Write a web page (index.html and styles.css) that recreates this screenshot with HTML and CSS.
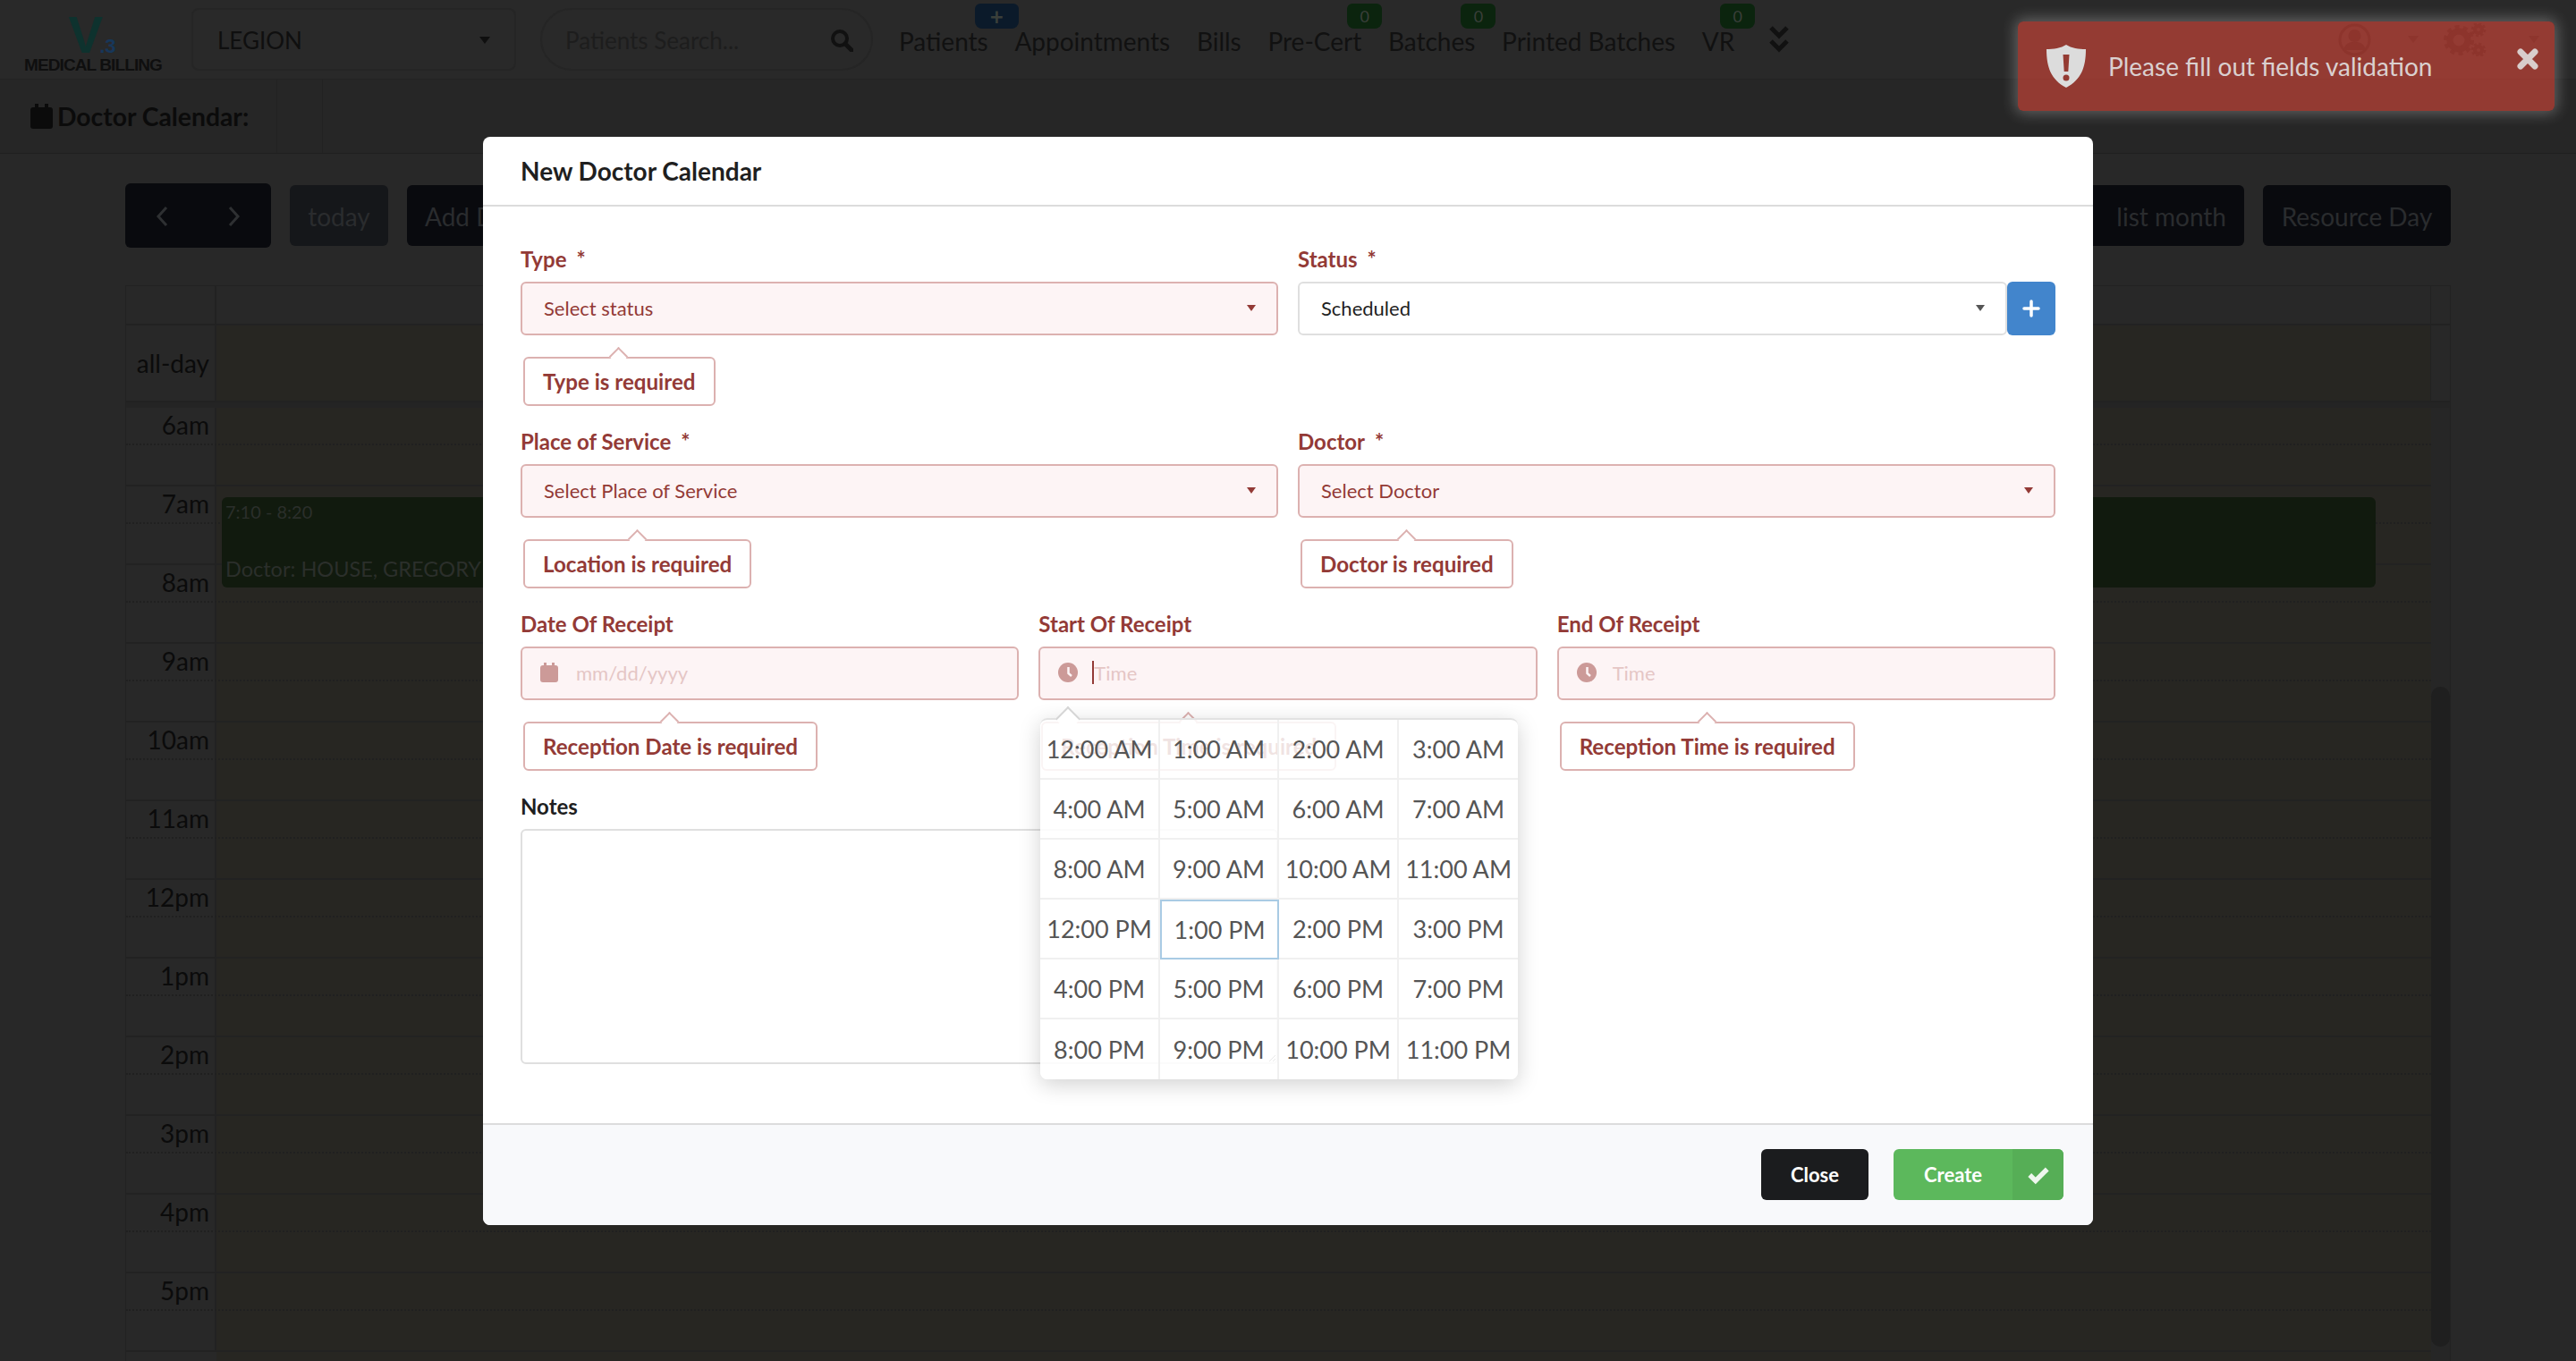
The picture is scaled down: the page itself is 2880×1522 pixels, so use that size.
FILE: index.html
```html
<!doctype html>

<html>
	<head>
		<meta charset="utf-8">
		<title>Doctor Calendar</title>
		<link rel="stylesheet" href="styles.css">
	</head>
	<body>
		<header id="topbar">
			<div class="logo">
				<div class="logo-mark"><span class="logo-v">V</span><span class="logo-ver">.3</span></div>
				<div class="logo-name">MEDICAL BILLING</div>
			</div>
			<div class="clinic-select"><span>LEGION</span><i class="caret"></i></div>
			<div class="search">
				<span>Patients Search...</span>
				<svg class="search-icon" viewBox="0 0 26 26"><circle cx="11" cy="11" r="8" fill="none" stroke="#111" stroke-width="4"/><path d="M17 17l7 7" stroke="#111" stroke-width="5" stroke-linecap="round"/></svg>
			</div>
			<nav class="nav">
				<a>Patients<b class="badge badge-blue">+</b></a>
				<a>Appointments</a>
				<a>Bills</a>
				<a>Pre-Cert<b class="badge badge-green">0</b></a>
				<a>Batches<b class="badge badge-green">0</b></a>
				<a>Printed Batches</a>
				<a>VR<b class="badge badge-green">0</b></a>
			</nav>
			<svg class="more" viewBox="0 0 24 30"><path d="M3 2l9 9 9-9M3 17l9 9 9-9" fill="none" stroke="#111" stroke-width="5"/></svg>
			<div class="user-tools">
				<svg class="user-icon" viewBox="0 0 37 37"><circle cx="18.500" cy="18.500" r="16.500" fill="none" stroke="#111" stroke-width="3"/><circle cx="18.500" cy="14" r="7" fill="#111"/><path d="M6 30c2-8 7-9 12.500-9S29 22 31 30z" fill="#111"/></svg>
				<i class="caret"></i>
				<svg class="gears-icon" viewBox="0 0 48 37"><circle cx="17" cy="19" r="10" fill="none" stroke="#111" stroke-width="7"/><circle cx="17" cy="19" r="15" fill="none" stroke="#111" stroke-width="4" stroke-dasharray="5 4.400"/><circle cx="39" cy="7" r="4" fill="none" stroke="#111" stroke-width="4"/><circle cx="39" cy="7" r="7" fill="none" stroke="#111" stroke-width="2.500" stroke-dasharray="3 2.500"/><circle cx="39" cy="30" r="4" fill="none" stroke="#111" stroke-width="4"/><circle cx="39" cy="30" r="7" fill="none" stroke="#111" stroke-width="2.500" stroke-dasharray="3 2.500"/></svg>
				<i class="caret"></i>
			</div>
		</header>

		<div id="subbar">
			<div class="subbar-title">
				<svg class="cal-icon" viewBox="0 0 25 28"><path d="M5 0h4v4h7V0h4v4h2a3 3 0 0 1 3 3v18a3 3 0 0 1-3 3H3a3 3 0 0 1-3-3V7a3 3 0 0 1 3-3h2z" fill="#0b0b0b"/></svg>
				<span>Doctor Calendar:</span>
			</div>
			<div class="subbar-cell"></div>
		</div>

		<div id="toolbar">
			<div class="toolbar-left">
				<div class="btn-pair">
					<button class="tb-btn"><svg viewBox="0 0 14 24"><path d="M12 2L3 12l9 10" fill="none" stroke="#2e3032" stroke-width="3"/></svg></button>
					<button class="tb-btn"><svg viewBox="0 0 14 24"><path d="M2 2l9 10-9 10" fill="none" stroke="#2e3032" stroke-width="3"/></svg></button>
				</div>
				<button class="tb-btn tb-today">today</button>
				<button class="tb-btn tb-add">Add Doctor Calendar</button>
			</div>
			<div class="toolbar-right">
				<button class="tb-btn tb-list">list month</button>
				<button class="tb-btn tb-resource">Resource Day</button>
			</div>
		</div>

		<section id="calendar">
			<div class="cal-head"><div class="cal-axis"></div><div class="cal-title"></div><div class="cal-gutter"></div></div>
			<div class="cal-allday"><div class="cal-axis">all-day</div><div class="cal-lane"></div><div class="cal-gutter"></div></div>
			<div class="cal-divider"></div>
			<div class="cal-body">
				<div class="cal-rows">
					<div class="cal-row"><div class="cal-axis">6am</div><div class="cal-lane"></div></div>
					<div class="cal-row"><div class="cal-axis">7am</div><div class="cal-lane"></div></div>
					<div class="cal-row"><div class="cal-axis">8am</div><div class="cal-lane"></div></div>
					<div class="cal-row"><div class="cal-axis">9am</div><div class="cal-lane"></div></div>
					<div class="cal-row"><div class="cal-axis">10am</div><div class="cal-lane"></div></div>
					<div class="cal-row"><div class="cal-axis">11am</div><div class="cal-lane"></div></div>
					<div class="cal-row"><div class="cal-axis">12pm</div><div class="cal-lane"></div></div>
					<div class="cal-row"><div class="cal-axis">1pm</div><div class="cal-lane"></div></div>
					<div class="cal-row"><div class="cal-axis">2pm</div><div class="cal-lane"></div></div>
					<div class="cal-row"><div class="cal-axis">3pm</div><div class="cal-lane"></div></div>
					<div class="cal-row"><div class="cal-axis">4pm</div><div class="cal-lane"></div></div>
					<div class="cal-row"><div class="cal-axis">5pm</div><div class="cal-lane"></div></div>
					<div class="cal-row"><div class="cal-lane cal-lane-full"></div></div>
					<div class="cal-event">
						<div class="event-time">7:10 - 8:20</div>
						<div class="event-title">Doctor: HOUSE, GREGORY</div>
					</div>
				</div>
				<div class="cal-scroll"><div class="cal-thumb"></div></div>
			</div>
		</section>

		<div id="toast">
			<svg class="toast-shield" viewBox="0 0 44 48"><path d="M22 0c6 4 14 5 22 5 0 20-5 34-22 43C5 39 0 25 0 5c8 0 16-1 22-5z" fill="#dcdcdc"/><path d="M18.500 11h7l-1.200 19h-4.600z" fill="#943b33"/><circle cx="22" cy="37" r="3.500" fill="#943b33"/></svg>
			<span>Please fill out fields validation</span>
			<svg class="toast-close" viewBox="0 0 24 24"><path d="M4 4l16 16M20 4L4 20" stroke="#d8cdcb" stroke-width="7" stroke-linecap="round"/></svg>
		</div>

		<div id="modal">
			<div class="modal-head">New Doctor Calendar</div>
			<div class="modal-body">
				<div class="form-row two">
					<div class="field invalid">
						<label>Type<em>*</em></label>
						<div class="select"><span>Select status</span><i class="caret"></i></div>
						<div class="tip">Type is required</div>
					</div>
					<div class="field invalid-label">
						<label>Status<em>*</em></label>
						<div class="select-group">
							<div class="select"><span>Scheduled</span><i class="caret"></i></div>
							<button class="add-btn"><svg viewBox="0 0 20 20"><path d="M10 2v16M2 10h16" stroke="#fff" stroke-width="3.500" stroke-linecap="round"/></svg></button>
						</div>
					</div>
				</div>
				<div class="form-row two">
					<div class="field invalid">
						<label>Place of Service<em>*</em></label>
						<div class="select"><span>Select Place of Service</span><i class="caret"></i></div>
						<div class="tip">Location is required</div>
					</div>
					<div class="field invalid">
						<label>Doctor<em>*</em></label>
						<div class="select"><span>Select Doctor</span><i class="caret"></i></div>
						<div class="tip">Doctor is required</div>
					</div>
				</div>
				<div class="form-row three">
					<div class="field invalid">
						<label>Date Of Receipt</label>
						<div class="input">
							<svg class="input-icon" viewBox="0 0 20 22"><path d="M4 0h3v3h6V0h3v3h1a3 3 0 0 1 3 3v13a3 3 0 0 1-3 3H3a3 3 0 0 1-3-3V6a3 3 0 0 1 3-3h1z" fill="#cc9a98"/></svg>
							<span class="placeholder">mm/dd/yyyy</span>
						</div>
						<div class="tip">Reception Date is required</div>
					</div>
					<div class="field invalid">
						<label>Start Of Receipt</label>
						<div class="input">
							<svg class="input-icon clock-icon" viewBox="0 0 22 22"><circle cx="11" cy="11" r="11" fill="#cc9a98"/><path d="M11.500 5v7l3.500 3" fill="none" stroke="#fdf4f5" stroke-width="2.500"/></svg>
							<i class="text-cursor"></i><span class="placeholder">Time</span>
						</div>
						<div class="tip">Reception Time is required</div>
						<div class="time-picker">
							<a>12:00 AM</a><a>1:00 AM</a><a>2:00 AM</a><a>3:00 AM</a>
							<a>4:00 AM</a><a>5:00 AM</a><a>6:00 AM</a><a>7:00 AM</a>
							<a>8:00 AM</a><a>9:00 AM</a><a>10:00 AM</a><a>11:00 AM</a>
							<a>12:00 PM</a><a class="active">1:00 PM</a><a>2:00 PM</a><a>3:00 PM</a>
							<a>4:00 PM</a><a>5:00 PM</a><a>6:00 PM</a><a>7:00 PM</a>
							<a>8:00 PM</a><a>9:00 PM</a><a>10:00 PM</a><a>11:00 PM</a>
						</div>
					</div>
					<div class="field invalid">
						<label>End Of Receipt</label>
						<div class="input">
							<svg class="input-icon clock-icon" viewBox="0 0 22 22"><circle cx="11" cy="11" r="11" fill="#cc9a98"/><path d="M11.500 5v7l3.500 3" fill="none" stroke="#fdf4f5" stroke-width="2.500"/></svg>
							<span class="placeholder">Time</span>
						</div>
						<div class="tip">Reception Time is required</div>
					</div>
				</div>
				<div class="form-row two">
					<div class="field">
						<label>Notes</label>
						<textarea class="notes"></textarea>
					</div>
				</div>
			</div>
			<div class="modal-foot">
				<button class="btn-close">Close</button>
				<button class="btn-create">
					<span>Create</span>
					<i class="btn-create-icon"><svg viewBox="0 0 24 20"><path d="M3 10l6 6L21 4" fill="none" stroke="#eef7ee" stroke-width="5"/></svg></i>
				</button>
			</div>
		</div>
	</body>
</html>
```

FILE: styles.css
```css
body, html {
	margin: 0;
	padding: 0;
	height: 100%;
	overflow: hidden;
	background: #282828;
	font-family: "Lato", sans-serif;
	color: #111;
}

button {
	font-family: inherit;
	border: 0;
	padding: 0;
}

.caret {
	display: inline-block;
	width: 0;
	height: 0;
	border-left: 6px solid transparent;
	border-right: 6px solid transparent;
	border-top: 8px solid #0f0f0f;
}

/* top bar */
#topbar {
	height: 88px;
	display: flex;
	align-items: center;
	padding-left: 27px;
	background: #292929;
	border-bottom: 1px solid #232323;
}

.logo {
	width: 152px;
	margin-right: 35px;
	text-align: center;
	padding-top: 10px;
}

.logo-mark {
	height: 44px;
	line-height: 44px;
	white-space: nowrap;
}

.logo-v {
	font: bold 58px/44px "Liberation Sans", sans-serif;
	color: #0e322e;
}

.logo-ver {
	margin-left: -4px;
	font: bold 22px/22px "Liberation Sans", sans-serif;
	color: #17375a;
}

.logo-name {
	margin-top: 3px;
	font: bold 19px/18px "Liberation Sans", sans-serif;
	letter-spacing: -.9px;
	color: #0f0f0f;
	white-space: nowrap;
}

.clinic-select {
	width: 363px;
	height: 70px;
	box-sizing: border-box;
	margin-right: 27px;
	padding: 2px 27px 0 27px;
	display: flex;
	align-items: center;
	justify-content: space-between;
	border: 2px solid #252525;
	border-radius: 8px;
	font-size: 26px;
	color: #0f0f0f;
}

.search {
	width: 372px;
	height: 70px;
	box-sizing: border-box;
	margin-right: 29px;
	padding: 2px 20px 0 26px;
	display: flex;
	align-items: center;
	justify-content: space-between;
	border: 2px solid #252525;
	border-radius: 35px;
	font-size: 26px;
	color: #1d1d1d;
}

.search-icon {
	width: 26px;
	height: 26px;
}

.nav {
	display: flex;
	gap: 29.700px;
	font-size: 28px;
	line-height: 34px;
	color: #111;
	padding-top: 3px;
}

.nav a {
	position: relative;
}

.badge {
	position: absolute;
	top: -25px;
	right: -23px;
	width: 39px;
	height: 28px;
	border-radius: 6px 6px 8px 8px;
	font-size: 18px;
	font-weight: 400;
	line-height: 28px;
	text-align: center;
	color: #3a3f3a;
}

.badge-green {
	background: #0b240e;
}

.badge-blue {
	width: 49px;
	right: -34px;
	background: #0b1a2a;
	font-weight: 700;
	font-size: 26px;
}

.more {
	width: 24px;
	height: 30px;
	margin-left: 38px;
}

.user-tools {
	margin-left: auto;
	margin-right: 41px;
	display: flex;
	align-items: center;
}

.user-icon {
	width: 37px;
	height: 37px;
	margin-right: 41px;
}

.user-tools .caret {
	border-top-color: #141414;
}

.gears-icon {
	width: 48px;
	height: 37px;
	margin: 0 47px 0 28px;
}

/* page title row */
#subbar {
	height: 82px;
	display: flex;
	background: #262626;
	border-bottom: 1px solid #202020;
}

.subbar-title {
	width: 310px;
	box-sizing: border-box;
	padding-left: 34px;
	display: flex;
	align-items: center;
	gap: 5px;
	border-right: 1px solid #222;
	font-size: 28.300px;
	font-weight: 700;
	color: #0b0b0b;
}

.cal-icon {
	width: 25px;
	height: 28px;
}

.subbar-cell {
	width: 50px;
	border-right: 1px solid #222;
}

/* calendar toolbar */
#toolbar {
	height: 72px;
	margin: 33px 140px 42px;
	display: flex;
	align-items: center;
	justify-content: space-between;
}

.toolbar-left, .toolbar-right {
	display: flex;
	align-items: center;
	gap: 21px;
}

.tb-btn {
	height: 68px;
	padding-top: 2px;
	border-radius: 6px;
	background: #090a0e;
	font-size: 28px;
	color: #2a2c2e;
}

.btn-pair {
	display: flex;
	width: 163px;
	height: 72px;
	border-radius: 6px;
	overflow: hidden;
}

.btn-pair .tb-btn {
	flex: 1;
	height: 72px;
	display: flex;
	align-items: center;
	justify-content: center;
	border-radius: 0;
}

.btn-pair svg {
	width: 14px;
	height: 24px;
}

.tb-today {
	width: 110px;
	background: #15171a;
}

.tb-add {
	width: 400px;
	padding-left: 20px;
	text-align: left;
}

.tb-list {
	width: 340px;
	padding-right: 20px;
	text-align: right;
}

.tb-resource {
	width: 210px;
}

/* calendar */
#calendar {
	margin: 0 140px;
	border-left: 1px solid #222;
	border-right: 1px solid #222;
	border-top: 1px solid #222;
}

.cal-axis {
	width: 101px;
	flex-shrink: 0;
	box-sizing: border-box;
	padding-right: 6px;
	text-align: right;
	font-size: 28px;
	color: #0b0b0b;
	border-right: 2px solid #222;
}

.cal-gutter {
	width: 21px;
	flex-shrink: 0;
	border-left: 1px solid #222;
}

.cal-head {
	height: 42px;
	display: flex;
	background: #282828;
	border-bottom: 2px solid #222;
}

.cal-title {
	flex: 1;
}

.cal-allday {
	height: 84px;
	display: flex;
	border-bottom: 2px solid #222;
}

.cal-allday .cal-axis {
	line-height: 84px;
}

.cal-lane {
	flex: 1;
	background: #272622;
}

.cal-lane-full {
	margin-left: 101px;
}

.cal-divider {
	height: 6px;
	background: #242424;
}

.cal-body {
	display: flex;
}

.cal-rows {
	flex: 1;
	position: relative;
}

.cal-row {
	height: 86px;
	display: flex;
	position: relative;
	border-bottom: 2px solid #222;
}

.cal-row::after {
	content: "";
	position: absolute;
	left: 0;
	right: 0;
	top: 40px;
	border-top: 2px dotted #202020;
}

.cal-row .cal-axis {
	line-height: 38px;
}

.cal-event {
	position: absolute;
	left: 107px;
	top: 100px;
	width: 2408px;
	height: 101px;
	box-sizing: border-box;
	padding: 1px 4px;
	border-radius: 6px;
	background: #111a0e;
	color: #2b2f2b;
	white-space: nowrap;
}

.event-time {
	font-size: 20px;
	line-height: 30px;
}

.event-title {
	margin-top: 33px;
	font-size: 23.500px;
	line-height: 32px;
}

.cal-scroll {
	width: 21px;
	flex-shrink: 0;
	position: relative;
	background: #262626;
}

.cal-thumb {
	position: absolute;
	left: 0;
	right: 0;
	top: 312px;
	height: 738px;
	border-radius: 11px;
	background: #1f1f1f;
}

/* notification */
#toast {
	position: absolute;
	left: 2256px;
	top: 24px;
	width: 600px;
	height: 100px;
	box-sizing: border-box;
	padding: 0 18px 0 32px;
	display: flex;
	align-items: center;
	border-radius: 6px;
	background: rgba(194, 67, 56, .7);
	box-shadow: 0 0 16px 3px rgba(255, 255, 255, .28);
	font-size: 28px;
	color: #dad0cf;
}

.toast-shield {
	width: 44px;
	height: 48px;
	margin-right: 25px;
}

.toast-close {
	width: 24px;
	height: 24px;
	margin-left: auto;
	margin-bottom: 16px;
}

/* dialog */
#modal {
	position: absolute;
	left: 540px;
	top: 153px;
	width: 1800px;
	height: 1217px;
	display: flex;
	flex-direction: column;
	border-radius: 8px;
	overflow: hidden;
	background: #fff;
}

.modal-head {
	height: 76px;
	flex-shrink: 0;
	padding: 0 42px;
	line-height: 76px;
	border-bottom: 2px solid #dcdcdc;
	font-size: 28px;
	font-weight: 700;
	color: #1f1f1f;
}

.modal-body {
	flex: 1;
	padding: 42px 42px 0 42px;
}

.modal-foot {
	height: 114px;
	flex-shrink: 0;
	display: flex;
	align-items: flex-start;
	justify-content: flex-end;
	gap: 28px;
	box-sizing: border-box;
	padding: 27px 33px 0 0;
	border-top: 2px solid #dcdcdc;
	background: #f8f9fb;
}

.form-row {
	height: 204px;
	display: grid;
	gap: 22px;
}

.form-row.two {
	grid-template-columns: repeat(2, 1fr);
}

.form-row.three {
	grid-template-columns: repeat(3, 1fr);
}

.field {
	position: relative;
}

.field label {
	display: block;
	height: 34px;
	margin-bottom: 8px;
	font-size: 24px;
	font-weight: 700;
	line-height: 34px;
	color: #1f1f1f;
}

.field label em {
	margin-left: 11px;
	font-style: normal;
}

.field.invalid label, .field.invalid-label label {
	color: #933a36;
}

.select, .input {
	height: 60px;
	box-sizing: border-box;
	display: flex;
	align-items: center;
	border: 2px solid #dfdfdf;
	border-radius: 6px;
	background: #fff;
	font-size: 22px;
	color: #1f1f1f;
}

.select {
	padding: 0 23px 2px 24px;
	justify-content: space-between;
}

.select .caret {
	border-left-width: 5px;
	border-right-width: 5px;
	border-top-width: 7px;
	border-top-color: #555;
}

.input {
	padding: 0 0 2px 20px;
}

.invalid .select, .invalid .input {
	border-color: #dcb1b0;
	background: #fdf4f5;
	color: #933a36;
}

.invalid .select .caret {
	border-top-color: #933a36;
}

.select-group {
	display: flex;
}

.select-group .select {
	flex: 1;
}

.add-btn {
	width: 54px;
	height: 60px;
	flex-shrink: 0;
	border-radius: 6px;
	background: #4285cc;
}

.add-btn svg {
	width: 20px;
	height: 20px;
	display: block;
	margin: 0 auto;
}

.input-icon {
	width: 20px;
	height: 22px;
	margin-right: 20px;
}

.clock-icon {
	width: 22px;
	margin-right: 18px;
}

.placeholder {
	color: #e5c6c5;
}

.text-cursor {
	width: 2px;
	height: 26px;
	margin-left: -2px;
	background: #933a36;
}

.tip {
	position: relative;
	width: fit-content;
	margin: 24px 0 0 3px;
	height: 55px;
	box-sizing: border-box;
	padding: 0 20px;
	border: 2px solid #dcb1b0;
	border-radius: 6px;
	background: #fff;
	font-size: 24.150px;
	font-weight: 700;
	line-height: 51px;
	color: #933a36;
	white-space: nowrap;
}

.tip::before {
	content: "";
	position: absolute;
	left: 50%;
	top: -10px;
	width: 15px;
	height: 15px;
	margin-left: -8px;
	box-sizing: border-box;
	border-left: 2px solid #dcb1b0;
	border-top: 2px solid #dcb1b0;
	background: #fff;
	transform: rotate(45deg);
}

.notes {
	display: block;
	width: 100%;
	height: 263px;
	box-sizing: border-box;
	border: 2px solid #dfdfdf;
	border-radius: 6px;
	background: #fff;
}

/* time dropdown */
.time-picker {
	position: absolute;
	z-index: 5;
	left: 2px;
	top: 122px;
	width: 534px;
	height: 404px;
	box-sizing: border-box;
	display: grid;
	grid-template-columns: repeat(4, 1fr);
	grid-template-rows: repeat(6, 1fr);
	border-top: 2px solid #e2e2e2;
	border-radius: 8px;
	background: rgba(255, 255, 255, .86);
	box-shadow: 0 6px 24px rgba(0, 0, 0, .18);
}

.time-picker::before {
	content: "";
	position: absolute;
	left: 21px;
	top: -11px;
	width: 20px;
	height: 20px;
	box-sizing: border-box;
	border-left: 2px solid #d5d5d5;
	border-top: 2px solid #d5d5d5;
	background: #fff;
	transform: rotate(45deg);
}

.time-picker a {
	display: flex;
	align-items: center;
	justify-content: center;
	box-sizing: border-box;
	border-right: 2px solid #f0f0f0;
	border-bottom: 2px solid #f0f0f0;
	font-size: 27px;
	color: #555;
}

.time-picker a:nth-child(4n) {
	border-right: 0;
}

.time-picker a:nth-child(n+21) {
	border-bottom: 0;
}

.time-picker a.active {
	border: 2px solid #a9cbe4;
}

/* footer buttons */
.btn-close {
	width: 120px;
	height: 57px;
	border-radius: 6px;
	background: #1b1c1e;
	color: #fff;
	font-size: 22px;
	font-weight: 700;
}

.btn-create {
	width: 190px;
	height: 57px;
	display: flex;
	border-radius: 6px;
	overflow: hidden;
	background: #5cb85c;
	color: #fff;
	font-size: 22px;
	font-weight: 700;
}

.btn-create span {
	flex: 1;
	line-height: 57px;
}

.btn-create-icon {
	width: 57px;
	display: flex;
	align-items: center;
	justify-content: center;
	background: #56ae56;
}

.btn-create-icon svg {
	width: 26px;
	height: 22px;
}
```
